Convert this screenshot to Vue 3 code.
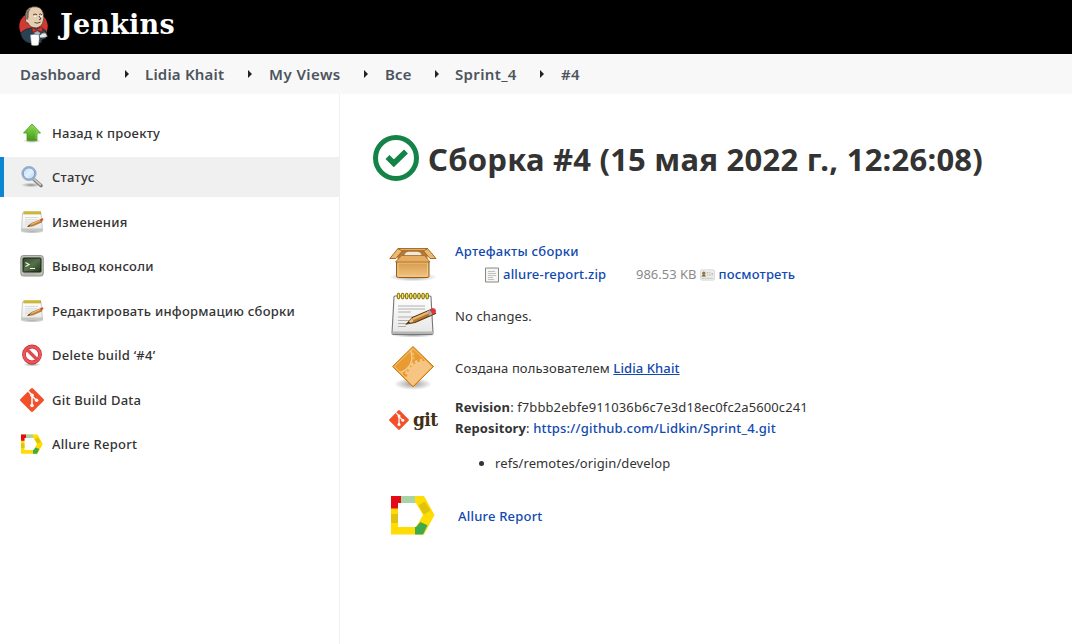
<script setup>
const crumbs = [
  { label: 'Dashboard', cls: 'c1' },
  { label: 'Lidia Khait', cls: 'c2' },
  { label: 'My Views', cls: 'c3' },
  { label: 'Все', cls: 'c4' },
  { label: 'Sprint_4', cls: 'c5' },
  { label: '#4', cls: 'c6' },
]
const tasks = [
  { label: 'Назад к проекту', icon: 'up' },
  { label: 'Статус', icon: 'search', active: true },
  { label: 'Изменения', icon: 'notepad' },
  { label: 'Вывод консоли', icon: 'terminal' },
  { label: 'Редактировать информацию сборки', icon: 'notepad' },
  { label: 'Delete build ‘#4’', icon: 'delete' },
  { label: 'Git Build Data', icon: 'git' },
  { label: 'Allure Report', icon: 'allure' },
]
const rings = [0, 1, 2, 3, 4, 5, 6, 7]
</script>

<template>
  <div class="page">
    <svg class="defs" width="0" height="0">
      <defs>
        <linearGradient id="green" x1="0" y1="0" x2="0" y2="1"><stop offset="0" stop-color="#8be04e" /><stop offset="1" stop-color="#46981a" /></linearGradient>
        <linearGradient id="lens" x1="0" y1="0" x2="1" y2="1"><stop offset="0" stop-color="#b5d3f3" /><stop offset=".5" stop-color="#e4f1fd" /><stop offset="1" stop-color="#a9cdf2" /></linearGradient>
        <linearGradient id="box" x1="0" y1="0" x2="0" y2="1"><stop offset="0" stop-color="#d6984a" /><stop offset="1" stop-color="#f0c480" /></linearGradient>
        <linearGradient id="orange" x1="0" y1="0" x2="1" y2="1"><stop offset="0" stop-color="#f0a63e" /><stop offset="1" stop-color="#e18c1c" /></linearGradient>
        <linearGradient id="paper" x1="0" y1="0" x2="0" y2="1"><stop offset="0" stop-color="#fff" /><stop offset="1" stop-color="#e6e6e4" /></linearGradient>
        <linearGradient id="screen" x1="0" y1="0" x2="1" y2="1"><stop offset="0" stop-color="#2f4a28" /><stop offset=".5" stop-color="#56704a" /><stop offset="1" stop-color="#22361d" /></linearGradient>
        <radialGradient id="shade"><stop offset="0" stop-opacity=".4" /><stop offset="1" stop-opacity="0" /></radialGradient>
        <clipPath id="gearclip"><path d="M24 5 43 24 24 43 5 24Z" /></clipPath>
        <symbol id="allure" viewBox="0 0 48 48">
          <path d="M2 5h33L45.500 24 35 43.500H2zM9 12v24H27l7-12-7-12z" fill="#ffdc04" fill-rule="evenodd" />
          <path d="M2 23h7v9H2zM29.500 14.500l6-4 6 9-6.500 4z" fill="#e0c30c" />
          <path d="M2 5h10v7H9v5.500H2z" fill="#e50b16" />
          <path d="M12 5h14v7H12z" fill="#a8d3a5" />
          <path d="M26 36H27l4.500-5 7 3.200-4.500 9.300h-8z" fill="#3dab4b" />
        </symbol>
        <symbol id="notepad" viewBox="0 0 24 24">
          <ellipse cx="12" cy="21.700" rx="12" ry="1.800" fill="url(#shade)" />
          <path d="M2.500 3h18.500l1.500 18H1.500z" fill="url(#paper)" stroke="#bcbcb8" stroke-width=".8" />
          <path d="M1.500 18.500h21v2.800h-21z" fill="#c5c5c1" />
          <path d="M3.500 1.300h17.500v3H3.500z" fill="#c4a92f" />
          <path d="M5 1v3.400M7 1v3.400M9 1v3.400M11 1v3.400M13 1v3.400M15 1v3.400M17 1v3.400M19 1v3.400" stroke="#e3d35c" stroke-width=".6" />
          <path d="M5 7.500h13M5 9.700h12M5 11.900h9M5 14.100h6" stroke="#d2d4d3" stroke-width=".8" />
          <path d="M7.500 16.500l4-3 9.200-4 1.300 2.400-9.500 4.200z" fill="#cf8736" stroke="#8a5a22" stroke-width=".6" />
          <path d="M11.500 14.300l8.500-3.800" stroke="#f3bd75" />
          <path d="M7.300 16.800l2-1.800.8 1.100z" fill="#333" />
          <path d="M20.500 8.900l2.300-.7.700 1.900-2.200 1.200z" fill="#e23c3b" />
        </symbol>
        <symbol id="gitmark" viewBox="0 0 24 24">
          <path d="M11 .5q1-.9 2 0L23.500 11q.9 1 0 2L13 23.500q-1 .9-2 0L.5 13q-.9-1 0-2z" fill="#f34f29" />
          <path d="M8.300 3.200 12 7v11M12.300 8.200l4 4" fill="none" stroke="#fff" stroke-width="1.500" />
          <circle cx="12" cy="7.300" r="1.800" fill="#fff" /><circle cx="12" cy="17.500" r="1.800" fill="#fff" /><circle cx="16.600" cy="12.300" r="1.800" fill="#fff" />
        </symbol>
      </defs>
    </svg>

    <header class="header">
      <svg class="butler" viewBox="0 0 30 40">
        <ellipse cx="14.500" cy="20.500" rx="14.200" ry="14" fill="#d33833" />
        <path d="M1.500 27Q6 22.500 12 22l6-1q7 1 9 4v7l-4 2-1 3H10Q3 35 1.500 27Z" fill="#2a4254" stroke="#111d27" stroke-width=".6" />
        <path d="M7 12Q5 2 14 .8q8-.8 10 5.700 2 6-.5 11-2 4-6 4.400Q11 22 9 17q-3 0-2.500-3z" fill="#e6cdb0" stroke="#4a3c33" stroke-width=".8" />
        <path d="M7.500 11Q6 4 12 2 9 6 9.700 10.500l-.7 3Q6.500 14 7.500 11" fill="#756a60" />
        <path d="M14 9q2-1.800 4-.3m2-.3q2-1.200 3 .5M20 10l2 3-2 .8M15.500 16.500q2.500 1.500 6-.3" stroke="#403832" stroke-width=".9" fill="none" />
        <path d="M15 10.500h2m4.500 0H23" stroke="#fff" stroke-width="1" />
        <path d="M13 22l4.500 1.500L23 20.500l.5 5.500-5-1.500-5 2z" fill="#d33833" stroke="#7c1818" stroke-width=".6" />
        <path d="M14.500 27l4-2 3 2-2 2.500z" fill="#9eb1bd" />
        <path d="M11.500 29q4-1.200 9 0l-1 10q-3.500 1-7 0z" fill="#fff" stroke="#aaa" stroke-width=".5" />
        <path d="M20 29.500q4-4 7-2.500l1.500 3.500q-3 2-7.500 1.500z" fill="#e6e6e6" stroke="#333" stroke-width=".7" />
      </svg>
      <span class="brand">Jenkins</span>
    </header>

    <nav class="crumbs">
      <div v-for="c in crumbs" :key="c.label" class="crumb" :class="c.cls">
        <span>{{ c.label }}</span>
        <svg v-if="c.label !== '#4'" class="arrow" viewBox="0 0 4 8"><path d="M0 0 4 4 0 8z" fill="#222" /></svg>
      </div>
    </nav>

    <div class="body">
      <aside class="side">
        <a v-for="t in tasks" :key="t.label" class="task" :class="{ active: t.active }">
          <svg class="ticon" viewBox="0 0 24 24">
            <g v-if="t.icon === 'up'"><ellipse cx="12" cy="20" rx="9" ry="2" fill="url(#shade)" /><path d="M12 3 20.500 12H17v7.500H7V12H3.500z" fill="url(#green)" stroke="#4a9a22" stroke-width=".8" /><path d="M12 4.500 18.500 11.200H16v7" fill="none" stroke="#9be26c" stroke-width=".6" /></g>
            <g v-else-if="t.icon === 'search'"><ellipse cx="11" cy="20" rx="10" ry="2.300" fill="url(#shade)" /><path d="M14 14.500l7 6" stroke="#777" stroke-width="3.600" stroke-linecap="round" /><path d="M14 14l6.500 5.700" stroke="#c8c8c8" stroke-width="1.800" stroke-linecap="round" /><circle cx="9" cy="8.500" r="6.800" fill="url(#lens)" stroke="#a3acb8" stroke-width="1.600" /><circle cx="9" cy="8.500" r="5.700" fill="none" stroke="#6b9fdb" stroke-width="1" /></g>
            <use v-else-if="t.icon === 'notepad'" href="#notepad" />
            <g v-else-if="t.icon === 'terminal'"><rect x=".8" y="1.500" width="22.500" height="20.500" rx="2.500" fill="#bebfba" stroke="#8a8d87" stroke-width=".9" /><rect x="3" y="4" width="18" height="14" rx=".8" fill="url(#screen)" stroke="#16210f" /><path d="M5.500 8.500 9 10.500l-3.500 2M10 14.500h5" fill="none" stroke="#f1f6ee" stroke-width="1.200" /><path d="M4 20h12" stroke="#a5a8a1" stroke-width=".8" /><circle cx="18" cy="20" r=".8" fill="#8ee443" /></g>
            <g v-else-if="t.icon === 'delete'"><ellipse cx="12" cy="21.500" rx="9" ry="2" fill="url(#shade)" /><circle cx="12" cy="11.500" r="8" fill="#fff" stroke="#c5282d" stroke-width="3.800" /><circle cx="12" cy="11.500" r="8" fill="none" stroke="#e8575a" stroke-width="2.600" /><path d="m6.500 6 11 11" stroke="#e04a4e" stroke-width="3.200" /></g>
            <use v-else-if="t.icon === 'git'" href="#gitmark" />
            <use v-else href="#allure" />
          </svg>
          <span class="tlabel">{{ t.label }}</span>
        </a>
      </aside>

      <main class="main">
        <h1 class="title">
          <svg class="ok" viewBox="0 0 46 46"><circle cx="23" cy="23" r="20.500" fill="none" stroke="#138347" stroke-width="5" /><path d="m14.500 22 6.300 6.300L33 16.500" fill="none" stroke="#138347" stroke-width="5.600" /></svg>
          <span>Сборка #4 (15 мая 2022 г., 12:26:08)</span>
        </h1>

        <section class="row artifacts">
          <svg class="icon" viewBox="0 0 48 48">
            <ellipse cx="24" cy="38" rx="24" ry="4.500" fill="url(#shade)" />
            <path d="M8.500 9.500h30v11h-30z" fill="#b17a3d" />
            <path d="M15.500 17q0-4 4-4.300h9q4 .3 4 4.300z" fill="#eee9df" />
            <path d="M7.500 22h32.500v15q0 1.500-2 1.500H9.500q-2 0-2-1.500z" fill="url(#box)" stroke="#9a5d15" />
            <path d="M9 24h29.500v13H9z" fill="none" stroke="#f5ce94" stroke-width=".8" />
            <path d="M12.500 16.500h23l5.500 6.500H6.500z" fill="#e5ac62" stroke="#a8691d" stroke-width=".8" />
            <path d="M9 9.500.8 19.500h6l7-8zM38.500 9.500 47 19.500h-6l-7-8z" fill="#edb971" stroke="#9a5d15" stroke-width=".9" />
            <path d="M9 9.500h29.500l-3 2.200h-23z" fill="#e2ac67" stroke="#9a5d15" stroke-width=".8" />
          </svg>
          <div class="artbox">
            <a class="link arthead">Артефакты сборки</a>
            <div class="file">
              <svg class="doc" viewBox="0 0 14 16"><path d="M.5 1h13v14H.5z" fill="#f5f5f4" stroke="#888a85" /><path d="M3 4.500h7M3 6.500h8M3 8.500h8M3 10.500h5M3 12.500h6" stroke="#b4b5b2" stroke-width=".8" /></svg>
              <a class="link fname">allure-report.zip</a>
              <span class="size">986.53 KB</span>
              <svg class="print" viewBox="0 0 16 12"><rect x=".5" y=".5" width="15" height="11" rx="1.500" fill="#ededeb" stroke="#dadad8" /><circle cx="4" cy="4" r="1.800" fill="#a66d3b" /><path d="M1.500 7.500q2.500-4 5 0z" fill="#4c7338" /><path d="M7 3.500h4m1 1h2M7 6h7M2 9.500h12" stroke="#a5a5a2" stroke-width=".8" stroke-dasharray="2 .8" /></svg>
              <a class="link view">посмотреть</a>
            </div>
          </div>
        </section>

        <section class="row changes">
          <svg class="icon" viewBox="0 0 48 48">
            <ellipse cx="24" cy="44" rx="23" ry="2.500" fill="url(#shade)" />
            <path d="M6 5h35q1 0 1 1l2 36q0 1.500-1.500 1.500H4.500Q3 43.500 3 42L5 6q0-1 1-1z" fill="url(#paper)" stroke="#777" stroke-width="1.100" />
            <path d="M3.500 40.500h40l.5 2.500H3.500z" fill="#b5b5b5" />
            <path d="M9 15h27M9 18h27M9 21h13M9 26h24M9 29.500h15M9 32.500h10M9 35.500h8" stroke="#b0b0b0" stroke-width="1" />
            <g v-for="r in rings" :key="r"><ellipse :cx="9.5 + r * 4.1" cy="5" rx="1.300" ry="2.800" fill="#f7e87a" stroke="#8f7a0a" stroke-width="1.100" /></g>
            <path d="M17.500 33l6-6.500 20-8.500 3 4.500-20.500 9z" fill="#b97830" stroke="#5c3509" stroke-width="1.100" />
            <path d="M24 28 40 21" stroke="#e9b873" stroke-width="2" /><path d="M17.500 33l5.500-6 1.500 3.500z" fill="#e8c28e" /><path d="M17 33.500l3-3.300.8 1.600z" fill="#222" />
            <path d="M38 20.200l3-1.300 2.600 4.400-3 1.400z" fill="#aaa" /><path d="M41 18.700l2.500-1.300q3-.5 3.500 2.300 0 2-3.500 3.500z" fill="#e3333a" />
          </svg>
          <span class="light nochange">No changes.</span>
        </section>

        <section class="row cause">
          <svg class="icon" viewBox="0 0 48 48">
            <ellipse cx="24" cy="41" rx="19" ry="6" fill="url(#shade)" />
            <path d="M24 3.500 44.500 23.500 24 44 3.500 23.500Z" fill="url(#orange)" stroke="#cf7b14" stroke-linejoin="round" />
            <g clip-path="url(#gearclip)"><circle cx="7" cy="14" r="16" fill="#e89b30" stroke="#f7cb8e" stroke-width="1.500" /><circle cx="7" cy="14" r="17.500" fill="none" stroke="#f2b768" stroke-width="2" stroke-dasharray="2.500 2.500" /><circle cx="35" cy="35" r="17" fill="#f6c583" /><circle cx="35" cy="35" r="18" fill="none" stroke="#f7cb8e" stroke-width="2.500" stroke-dasharray="2.500 2.500" /></g>
            <path d="M24 5.500 42.500 23.500 24 42 5.500 23.500Z" fill="none" stroke="#f7c379" stroke-width=".9" />
          </svg>
          <span class="light causetext">Создана пользователем <a class="link under">Lidia Khait</a></span>
        </section>

        <section class="row gitrow">
          <div class="gitlogo"><svg class="gitmark" viewBox="0 0 24 24"><use href="#gitmark" /></svg><span>git</span></div>
          <div class="gitinfo">
            <div class="light rev"><b>Revision</b>: f7bbb2ebfe911036b6c7e3d18ec0fc2a5600c241</div>
            <div class="light repo"><b>Repository</b>: <a class="link">https://github.com/Lidkin/Sprint_4.git</a></div>
            <ul class="refs"><li class="light">refs/remotes/origin/develop</li></ul>
          </div>
        </section>

        <section class="row allure">
          <svg class="icon" viewBox="0 0 48 48"><use href="#allure" /></svg>
          <a class="link report">Allure Report</a>
        </section>
      </main>
    </div>
  </div>
</template>

<style>
body { background: #fff; }
</style>

<style scoped>
.page { width: 1072px; height: 644px; overflow: hidden; display: flex; flex-direction: column; font-family: "Noto Sans", "Open Sans", sans-serif; font-size: 13px; color: #333; background: #fff; }
.defs { position: absolute; }
.header { height: 54px; flex: none; background: #000; display: flex; align-items: flex-start; padding-left: 19px; box-sizing: border-box; }
.butler { width: 30px; height: 40px; margin-top: 6px; }
.brand { margin: 8px 0 0 11px; font: bold 27px/34px "DejaVu Serif", serif; letter-spacing: .2px; color: #fff; }
.crumbs { height: 40px; flex: none; background: #f8f8f8; display: flex; align-items: center; padding-left: 20px; font-size: 15px; font-weight: 600; letter-spacing: .2px; color: #4d545d; white-space: nowrap; }
.crumb { display: flex; align-items: center; justify-content: space-between; }
.crumb span { line-height: 40px; }
.arrow { width: 4px; height: 8px; }
.c1 { width: 109px; margin-right: 16px; letter-spacing: .1px; }
.c2 { width: 107px; margin-right: 17px; }
.c3 { width: 99px; margin-right: 17px; letter-spacing: .45px; }
.c4 { width: 54px; margin-right: 16px; }
.c5 { width: 89px; margin-right: 17px; letter-spacing: .35px; }
.body { flex: 1; display: flex; min-height: 0; }
.side { width: 340px; flex: none; box-sizing: border-box; border-right: 1px solid #f0f0f0; padding-top: 18.5px; display: flex; flex-direction: column; gap: 4.5px; }
.task { height: 40px; display: flex; align-items: center; gap: 8px; padding-left: 20px; font-weight: 500; letter-spacing: .25px; white-space: nowrap; }
.active { background: #f0f0f0; box-shadow: inset 4px 0 #0b87d2; }
.ticon { width: 24px; height: 24px; }
.main { padding: 41px 0 0 33px; flex: 1; }
.title { margin: 0; height: 46px; display: flex; align-items: center; gap: 9px; font-size: 31px; font-weight: 700; letter-spacing: .23px; white-space: nowrap; line-height: 46px; }
.title span { padding-top: 2px; }
.ok { width: 46px; height: 46px; flex: none; }
.row { display: flex; align-items: center; padding-left: 16px; white-space: nowrap; }
.icon { width: 48px; height: 48px; flex: none; }
.artifacts { height: 48px; margin-top: 58px; }
.artbox { margin-left: 18px; height: 46px; }
.artbox > .link { display: block; line-height: 23px; }
.link { color: #1049b0; font-weight: 500; letter-spacing: .2px; }
.artbox .arthead { letter-spacing: .25px; }
.file { display: flex; align-items: center; height: 22px; padding-left: 30px; }
.doc { width: 14px; height: 16px; margin: 2px 4px 0 0; }
.fname { width: 133px; }
.size { width: 64px; color: #8b8b8b; }
.print { width: 15px; height: 12px; margin: 2px 4px 0 0; }
.file .view { letter-spacing: .15px; margin-left: -.5px; }
.light { font-weight: 400; letter-spacing: .1px; }
.changes { height: 48px; margin-top: 4px; }
.changes span { margin-left: 18px; padding-top: 2px; }
.cause span { margin-left: 18px; padding-top: 2px; }
.light .under { text-decoration: underline; letter-spacing: .1px; }
.cause { height: 48px; margin-top: 4px; }
.gitrow { height: 78px; margin-top: 6px; align-items: flex-start; }
.gitlogo { width: 48px; height: 45px; display: flex; align-items: center; gap: 4px; color: #413016; font: bold 19px "DejaVu Serif Condensed", "DejaVu Serif", serif; font-stretch: condensed; letter-spacing: -.6px; }
.gitlogo span { margin-top: -2px; }
.gitmark { width: 20px; height: 20px; flex: none; }
.gitinfo { margin-left: 18px; line-height: 21px; }
.refs { margin: 14px 0 0; padding-left: 40px; }
b { font-weight: 700; }
.allure { height: 48px; margin-top: 16px; }
.report { margin-left: 21px; padding-top: 2px; }
</style>
